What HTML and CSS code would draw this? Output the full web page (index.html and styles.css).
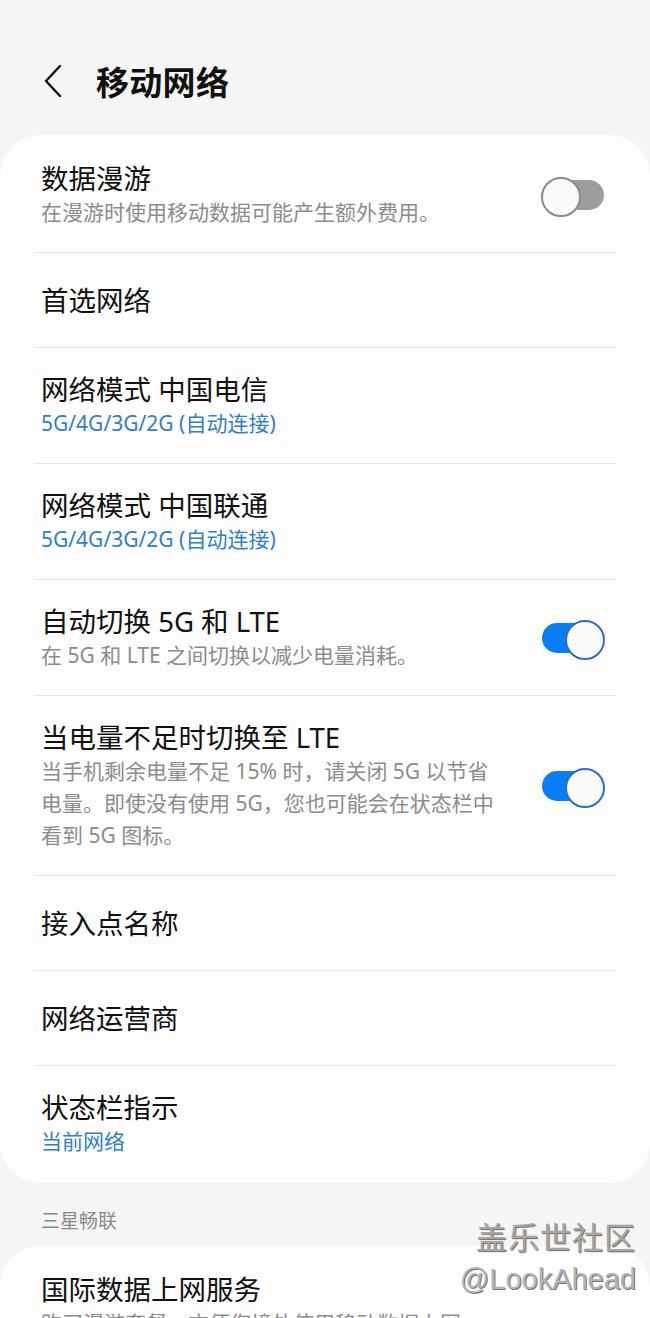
FILE: index.html
```html
<!DOCTYPE html>
<html lang="zh-CN">
<head>
    <meta charset="UTF-8">
    <meta name="viewport" content="width=device-width, initial-scale=1.0">
    <title>移动网络</title>
    <link rel="stylesheet" href="styles.css">
</head>
<body>
    <header class="top-bar">
        <span class="back-btn">
            <svg width="22" height="34" viewBox="0 0 22 34"><path d="M18 2 L4 17 L18 32" fill="none" stroke="#111" stroke-width="2.4" stroke-linecap="round" stroke-linejoin="round"/></svg>
        </span>
        <h1>移动网络</h1>
    </header>

    <section class="card">
        <div class="row">
            <div class="row-text">
                <p class="row-title">数据漫游</p>
                <p class="row-sub">在漫游时使用移动数据可能产生额外费用。</p>
            </div>
            <span class="toggle"></span>
        </div>
        <div class="row single">
            <div class="row-text">
                <p class="row-title">首选网络</p>
            </div>
        </div>
        <div class="row">
            <div class="row-text">
                <p class="row-title">网络模式 中国电信</p>
                <p class="row-sub blue">5G/4G/3G/2G (自动连接)</p>
            </div>
        </div>
        <div class="row">
            <div class="row-text">
                <p class="row-title">网络模式 中国联通</p>
                <p class="row-sub blue">5G/4G/3G/2G (自动连接)</p>
            </div>
        </div>
        <div class="row">
            <div class="row-text">
                <p class="row-title">自动切换 5G 和 LTE</p>
                <p class="row-sub">在 5G 和 LTE 之间切换以减少电量消耗。</p>
            </div>
            <span class="toggle on"></span>
        </div>
        <div class="row">
            <div class="row-text narrow">
                <p class="row-title">当电量不足时切换至 LTE</p>
                <p class="row-sub">当手机剩余电量不足 15% 时，请关闭 5G 以节省电量。即使没有使用 5G，您也可能会在状态栏中看到 5G 图标。</p>
            </div>
            <span class="toggle on"></span>
        </div>
        <div class="row single">
            <div class="row-text">
                <p class="row-title">接入点名称</p>
            </div>
        </div>
        <div class="row single">
            <div class="row-text">
                <p class="row-title">网络运营商</p>
            </div>
        </div>
        <div class="row">
            <div class="row-text">
                <p class="row-title">状态栏指示</p>
                <p class="row-sub blue">当前网络</p>
            </div>
        </div>
    </section>

    <p class="section-label">三星畅联</p>

    <section class="card">
        <div class="row">
            <div class="row-text">
                <p class="row-title">国际数据上网服务</p>
                <p class="row-sub">购买漫游套餐，方便您境外使用移动数据上网。</p>
            </div>
        </div>
    </section>

    <!-- 水印 -->
    <div class="watermark">
        <span class="wm-cn">盖乐世社区</span>
        <span class="wm-en">@LookAhead</span>
    </div>
</body>
</html>
```

FILE: styles.css
```css
* {
    margin: 0;
    padding: 0;
    box-sizing: border-box;
}

body {
    font-family: "Noto Sans", "Noto Sans CJK SC", sans-serif;
    background: #f5f5f5;
    color: #111;
    width: 650px;
    height: 1318px;
    overflow: hidden;
    position: relative;
}

/* 顶部标题栏 */
.top-bar {
    display: flex;
    align-items: center;
    height: 135px;
    padding: 26px 0 0 42px;
}

.back-btn {
    display: flex;
    width: 54px;
}

.top-bar h1 {
    font-size: 33px;
    font-weight: bold;
    letter-spacing: 0.3px;
}

/* 卡片 */
.card {
    background: #fdfdfd;
    border-radius: 40px;
    padding: 2px 34px 2px 34px;
}

.row {
    display: flex;
    align-items: center;
    justify-content: space-between;
    padding: 25px 12px 24px 7px;
    border-top: 1px solid #e6e6e6;
    min-height: 95px;
}

.row:first-child {
    border-top: none;
}

.row-text.narrow {
    max-width: 460px;
}

.row-title {
    font-size: 27.5px;
    line-height: 34px;
}

.row-sub {
    font-size: 21px;
    line-height: 32px;
    color: #8c8c8c;
}

.row-sub.blue {
    color: #3580c0;
}

/* 开关 */
.toggle {
    position: relative;
    flex-shrink: 0;
    width: 62px;
    height: 30px;
    border-radius: 15px;
    background: #9d9d9d;
}

.toggle::after {
    content: "";
    position: absolute;
    left: -1px;
    top: -3px;
    width: 36px;
    height: 36px;
    border-radius: 50%;
    background: #fafafa;
    border: 2px solid #8a8a8a;
}

.toggle.on {
    background: #0b7df2;
}

.toggle.on::after {
    left: auto;
    right: -1px;
    border-color: #2a6fc4;
}

/* 分组标题 */
.section-label {
    font-size: 19px;
    color: #8a8a8a;
    padding: 24px 0 11px 41px;
    line-height: 28px;
}

/* 水印 */
.watermark {
    position: absolute;
    right: 14px;
    top: 1219px;
    display: flex;
    flex-direction: column;
    align-items: flex-end;
    font-family: "Liberation Sans", "Noto Sans CJK SC", sans-serif;
    color: #a6a6a6;
    text-shadow: 1px 1px 1px #6a6a6a;
}

.wm-cn {
    font-size: 31px;
    line-height: 40px;
    letter-spacing: 1px;
}

.wm-en {
    font-size: 29px;
    line-height: 40px;
    color: #b4b4b4;
    text-shadow: 1px 1px 0 #777;
}
```
